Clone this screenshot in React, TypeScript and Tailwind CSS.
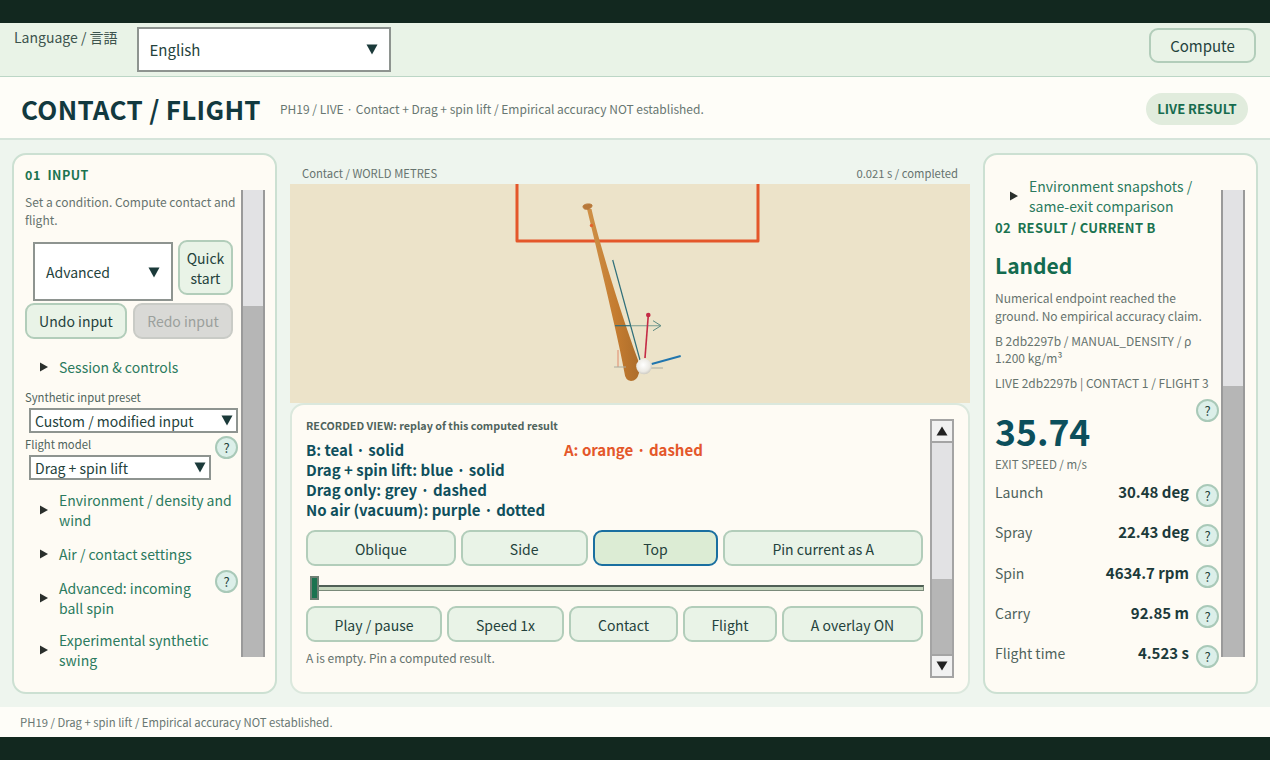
import React from "react";

const Q = ({ className = "" }: { className?: string }) => (
  <span className={`flex h-[23px] w-[23px] shrink-0 items-center justify-center rounded-full border-2 border-[#a9c9b8] bg-[#dcefe9] text-[13px] leading-none text-[#24423c] ${className}`}>?</span>
);

const Caret = () => (
  <svg width="12" height="11" viewBox="0 0 12 11" className="shrink-0"><polygon points="0.5,0.5 11.5,0.5 6,10.5" fill="#1b3a3a" /></svg>
);

const Select = ({ label, className = "" }: { label: string; className?: string }) => (
  <div className={`flex items-center justify-between border-2 border-[#8e9490] bg-white text-[#24423c] ${className}`}>
    <span>{label}</span>
    <Caret />
  </div>
);

const Btn = ({ children, className = "" }: { children: React.ReactNode; className?: string }) => (
  <div className={`flex items-center justify-center rounded-[9px] border-2 border-[#b2cdba] bg-[#e9f3e7] text-center text-[14px] leading-[20px] text-[#24423c] ${className}`}>{children}</div>
);

const Disclosure = ({ children, className = "" }: { children: React.ReactNode; className?: string }) => (
  <div className={`flex items-center text-[14px] leading-[20px] text-[#2b7a5e] ${className}`}>
    <svg width="8" height="10" viewBox="0 0 8 10" className="shrink-0"><polygon points="0,0.5 8,5 0,9.5" fill="#2a2f2c" /></svg>
    <span className="ml-[11px]">{children}</span>
  </div>
);

const Scroll = ({ thumb, className = "" }: { thumb: string; className?: string }) => (
  <div className={`flex w-[24px] shrink-0 flex-col border-x-2 border-x-[#9a9a9a] bg-[#b6b6b6] ${className}`}>
    <div className={`bg-[#e2e2e4] ${thumb}`} />
  </div>
);

const Row = ({ k, v }: { k: string; v: string }) => (
  <div className="flex h-[40.35px] items-start pr-[2px]">
    <span className="flex-1 pt-[1px] text-[14px] leading-[20px] text-[#4f635c]">{k}</span>
    <span className="mr-[7px] pt-[1px] text-[15px] font-bold leading-[20px] text-[#1c3a3a]">{v}</span>
    <Q className="mt-[3px]" />
  </div>
);

const Scene = () => (
  <svg viewBox="0 0 680 219" className="block h-[219px] w-[680px]">
    <defs>
      <linearGradient id="bat" x1="0" y1="0" x2="1" y2="0">
        <stop offset="0" stopColor="#cf9148" />
        <stop offset="0.55" stopColor="#c47c30" />
        <stop offset="1" stopColor="#ad6d2b" />
      </linearGradient>
      <radialGradient id="ball" cx="0.45" cy="0.4" r="0.65">
        <stop offset="0" stopColor="#ffffff" />
        <stop offset="0.65" stopColor="#eceae4" />
        <stop offset="1" stopColor="#c4c2ba" />
      </radialGradient>
    </defs>
    <g transform="translate(-290 -184)" fill="none">
      <path d="M517 184V241H758V184" stroke="#e4572a" strokeWidth="3" strokeLinejoin="round" />
      <path d="M587 209L591.500 209C598 238 620 312 638 360Q640 368 639 373Q637 381 631 381Q625 380 624.500 373C621 352 610 305 587 209Z" fill="url(#bat)" stroke="none" />
      <path d="M583 206C584 204 590 203 592 205C592.500 208 588 210 585 209C584 209 583 208 583 206Z" fill="#b8793a" stroke="#b8793a" strokeWidth="1" />
      <circle cx="591.500" cy="225.500" r="1.700" fill="#e4632f" />
      <path d="M612.700 260L640 360" stroke="#2f6f7a" strokeWidth="1.200" />
      <path d="M615 325.700H631" stroke="#2f6f7a" strokeWidth="1.200" />
      <path d="M631 325.700H660" stroke="#8aa79a" strokeWidth="1.200" />
      <path d="M653 320.700L661 325.700L653 330.700" stroke="#5d8a82" strokeWidth="1" />
      <path d="M648.300 315L645 358" stroke="#c42a45" strokeWidth="1.600" />
      <circle cx="648.300" cy="315" r="2.300" fill="#c42a45" />
      <path d="M651.700 364L680.700 356" stroke="#2176ae" strokeWidth="2" />
      <path d="M618 350V367" stroke="#e0896a" strokeWidth="1" />
      <path d="M614 367H626M650 368H663" stroke="#a9aca0" strokeWidth="1" />
      <circle cx="644" cy="366.500" r="7.800" fill="url(#ball)" stroke="none" />
    </g>
  </svg>
);

export default function App() {
  return (
    <div className="flex h-[760px] w-[1270px] flex-col overflow-hidden bg-[#eef5ee] font-['Noto_Sans_CJK_JP','Noto_Sans',sans-serif] text-[#24423c]">
      <div className="h-[23px] shrink-0 bg-[#12281f]" />

      <div className="flex h-[54px] shrink-0 items-start border-b border-b-[#bcd6c6] bg-[#e9f3e7] pl-[14px] pr-[14px]">
        <span className="mt-[5px] text-[14px] leading-[18px] text-[#3d544d]">Language / 言語</span>
        <Select label="English" className="ml-[19px] mt-[4px] h-[45px] w-[254px] pl-[11px] pr-[11px] text-[15px] leading-[22px]" />
        <Btn className="ml-auto mt-[5px] h-[35px] w-[107px] pt-[1px] text-[15px]">Compute</Btn>
      </div>

      <div className="flex h-[63px] shrink-0 items-center border-b-2 border-b-[#d5e4da] bg-[#fefdf8] pl-[21px] pr-[22px] pt-[2px]">
        <h1 className="text-[26px] font-bold leading-[34px] tracking-[0.3px] text-[#12393f]">CONTACT / FLIGHT</h1>
        <span className="ml-[19px] text-[12px] leading-[18px] text-[#687772]">PH19 / LIVE · Contact + Drag + spin lift / Empirical accuracy NOT established.</span>
        <span className="ml-auto flex h-[32px] w-[102px] items-center justify-center rounded-full bg-[#e1ecdd] text-[13px] font-bold text-[#176b4e]">LIVE RESULT</span>
      </div>

      <div className="flex min-h-0 flex-1 gap-[13px] px-[12px] pb-[13px] pt-[13px]">
        <section className="flex h-[541px] w-[265px] shrink-0 rounded-[14px] border-2 border-[#cce0d2] bg-[#fefbf4] pl-[11px]">
          <div className="w-[216px] shrink-0">
            <div className="mt-[11px] text-[12.5px] font-bold leading-[18px] tracking-[0.5px] text-[#1b7350]">01&nbsp; INPUT</div>
            <p className="mt-[9px] text-[12px] leading-[18px] text-[#66736e]">Set a condition. Compute contact and flight.</p>
            <div className="mt-[13px] flex items-start gap-[5px] pl-[8px]">
              <Select label="Advanced" className="h-[59px] w-[140px] pl-[11px] pr-[11px] pt-[1px] text-[14px]" />
              <Btn className="-mt-[2px] h-[55px] w-[55px]">Quick start</Btn>
            </div>
            <div className="mt-[2px] flex gap-[6px]">
              <Btn className="h-[36px] w-[102px]">Undo input</Btn>
              <div className="flex h-[36px] w-[100px] items-center justify-center rounded-[9px] border-2 border-[#c9cbc6] bg-[#d9d9d6] text-[14px] text-[#9ba09c]">Redo input</div>
            </div>
            <Disclosure className="ml-[15px] mt-[18px]">Session &amp; controls</Disclosure>
            <div className="mt-[11px] text-[11.250px] leading-[18px] text-[#4f635c]">Synthetic input preset</div>
            <Select label="Custom / modified input" className="ml-[4px] mt-[2px] h-[25px] w-[209px] pl-[4px] pr-[3px] text-[14px] leading-[20px]" />
            <div className="relative">
              <div className="mt-[2px] text-[11.250px] leading-[18px] text-[#4f635c]">Flight model</div>
              <Select label="Drag + spin lift" className="ml-[4px] mt-[2px] h-[25px] w-[182px] pl-[4px] pr-[3px] text-[14px] leading-[20px]" />
              <Q className="absolute right-[3px] top-[1px]" />
            </div>
            <Disclosure className="ml-[15px] mt-[10px]">Environment / density and wind</Disclosure>
            <Disclosure className="ml-[15px] mt-[14px]">Air / contact settings</Disclosure>
            <div className="relative">
              <Disclosure className="ml-[15px] mt-[14px] w-[170px]">Advanced: incoming ball spin</Disclosure>
              <Q className="absolute right-[3px] top-[-8px]" />
            </div>
            <Disclosure className="ml-[15px] mt-[12px] w-[176px]">Experimental synthetic swing</Disclosure>
          </div>
          <Scroll thumb="h-[116px]" className="mt-[35px] h-[467px]" />
        </section>

        <section className="flex h-[541px] w-[680px] shrink-0 flex-col">
          <div className="flex h-[31px] shrink-0 items-end justify-between px-[12px] pb-[2px] text-[11.250px] leading-[18px] text-[#66736e]">
            <span>Contact / WORLD METRES</span>
            <span>0.021 s / completed</span>
          </div>
          <div className="h-[219px] shrink-0 bg-[#ece3c9]"><Scene /></div>
          <div className="flex h-[291px] shrink-0 rounded-[14px] border-2 border-[#dbe8dd] bg-[#fefbf4] pl-[14px] pr-[14px]">
            <div className="w-[617px] shrink-0">
              <div className="mt-[12px] text-[10.750px] font-bold leading-[18px] text-[#4f635c]">RECORDED VIEW: replay of this computed result</div>
              <div className="mt-[5px] text-[15px] font-bold leading-[20px] text-[#0f4f5c]">
                <div className="flex"><span className="w-[258px]">B: teal · solid</span><span className="text-[#e4572a]">A: orange · dashed</span></div>
                <div>Drag + spin lift: blue · solid</div>
                <div>Drag only: grey · dashed</div>
                <div>No air (vacuum): purple · dotted</div>
              </div>
              <div className="mt-[10px] flex gap-[5px]">
                <Btn className="h-[36px] w-[150px] pt-[1px]">Oblique</Btn>
                <Btn className="h-[36px] w-[127px] pt-[1px]">Side</Btn>
                <Btn className="h-[36px] w-[126px] !border-[#1a6fa0] !bg-[#dcecd4] pt-[1px]">Top</Btn>
                <Btn className="h-[36px] w-[200px] pt-[1px]">Pin current as A</Btn>
              </div>
              <div className="relative mt-[9px] h-[25px]">
                <div className="absolute left-[12px] top-[10px] h-[6px] w-[606px] border-b border-r border-t-2 border-b-[#7a8a7a] border-r-[#7a8a7a] border-t-[#4f5f55] bg-[#c5d6bd]" />
                <div className="absolute left-[4px] top-[1px] h-[24px] w-[9px] border-2 border-[#6f7f74] bg-[#1b7350]" />
              </div>
              <div className="mt-[6px] flex gap-[5px]">
                <Btn className="h-[36px] w-[136px] pt-[1px]">Play / pause</Btn>
                <Btn className="h-[36px] w-[117px] pt-[1px]">Speed 1x</Btn>
                <Btn className="h-[36px] w-[109px] pt-[1px]">Contact</Btn>
                <Btn className="h-[36px] w-[94px] pt-[1px]">Flight</Btn>
                <Btn className="h-[36px] w-[141px] pt-[1px]">A overlay ON</Btn>
              </div>
              <div className="mt-[7px] text-[12px] leading-[18px] text-[#66736e]">A is empty. Pin a computed result.</div>
            </div>
            <div className="ml-[7px] mt-[14px] flex h-[259px] w-[24px] shrink-0 flex-col border-2 border-[#a4a4a4] bg-[#b6b6b6]">
              <div className="flex h-[22px] items-center justify-center border-b-2 border-b-[#a4a4a4] bg-[#f1f1f1]"><svg width="12" height="10" viewBox="0 0 12 10"><polygon points="0.5,9.500 11.5,9.500 6,0.5" fill="#222" /></svg></div>
              <div className="h-[136px] bg-[#e2e2e4]" />
              <div className="flex-1" />
              <div className="flex h-[22px] items-center justify-center border-t-2 border-t-[#a4a4a4] bg-[#f1f1f1]"><svg width="12" height="10" viewBox="0 0 12 10"><polygon points="0.5,0.5 11.5,0.5 6,9.500" fill="#222" /></svg></div>
            </div>
          </div>
        </section>

        <section className="flex h-[541px] w-[275px] shrink-0 rounded-[14px] border-2 border-[#cce0d2] bg-[#fefbf4] pl-[10px]">
          <div className="w-[226px] shrink-0">
            <Disclosure className="ml-[15px] mt-[21px]">Environment snapshots / same-exit comparison</Disclosure>
            <div className="mt-[2px] text-[13px] font-bold leading-[20px] tracking-[0.3px] text-[#1b7350]">02&nbsp; RESULT / CURRENT B</div>
            <div className="mt-[11px] text-[21px] font-bold leading-[32px] text-[#136b4f]">Landed</div>
            <p className="mt-[8px] text-[12px] leading-[18px] text-[#66736e]">Numerical endpoint reached the ground. No empirical accuracy claim.</p>
            <p className="mt-[7px] text-[12px] leading-[17px] text-[#66736e]">B 2db2297b / MANUAL_DENSITY / ρ 1.200 kg/m³</p>
            <p className="mt-[8px] whitespace-nowrap text-[12px] leading-[18px] text-[#66736e]">LIVE 2db2297b | CONTACT 1 / FLIGHT 3</p>
            <div className="relative">
              <Q className="absolute right-[2px] top-[7px]" />
            </div>
            <div className="mt-[16px] text-[35.500px] font-bold leading-[46px] text-[#0c4f5c]">35.74</div>
            <div className="mt-[2px] text-[11.500px] leading-[16px] text-[#66736e]">EXIT SPEED / m/s</div>
            <div className="mt-[9px]">
              <Row k="Launch" v="30.48 deg" />
              <Row k="Spray" v="22.43 deg" />
              <Row k="Spin" v="4634.7 rpm" />
              <Row k="Carry" v="92.85 m" />
              <Row k="Flight time" v="4.523 s" />
            </div>
          </div>
          <Scroll thumb="h-[196px]" className="mt-[35px] h-[467px]" />
        </section>
      </div>

      <div className="flex h-[30px] shrink-0 items-center bg-[#fefdf8] pl-[20px] text-[11.300px] text-[#687772]">PH19 / Drag + spin lift / Empirical accuracy NOT established.</div>
      <div className="h-[23px] shrink-0 bg-[#12281f]" />
    </div>
  );
}
